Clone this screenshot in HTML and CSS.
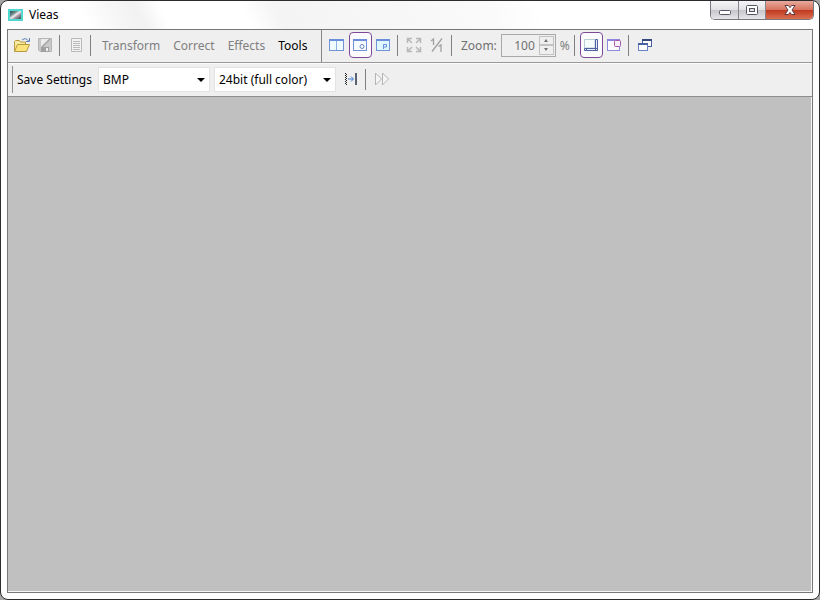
FILE: index.html
```html
<!DOCTYPE html>
<html lang="en">
<head>
    <meta charset="UTF-8">
    <meta name="viewport" content="width=device-width, initial-scale=1.0">
    <title>Vieas</title>
    <link rel="stylesheet" href="styles.css">
</head>
<body>

<div class="window">
    <header class="titlebar">
        <svg class="app-icon" width="16" height="14" viewBox="0 0 16 14">
            <defs>
                <linearGradient id="logo" x1="0" y1="0" x2="1" y2="1">
                    <stop offset="0" stop-color="#2c5658"/>
                    <stop offset="0.3" stop-color="#6b8584"/>
                    <stop offset="0.5" stop-color="#f4eef2"/>
                    <stop offset="0.65" stop-color="#a89aa4"/>
                    <stop offset="1" stop-color="#33454b"/>
                </linearGradient>
            </defs>
            <rect x="0" y="1" width="15" height="12" fill="#4fd8cf"/>
            <rect x="2" y="3" width="11" height="8" fill="url(#logo)"/>
        </svg>
        <span class="title">Vieas</span>
        <div class="window-buttons">
            <button class="win-btn minimize" aria-label="Minimize">
                <svg width="14" height="14" viewBox="0 0 14 14"><rect x="1.5" y="7.5" width="11" height="4" rx="1" fill="#fff" stroke="#555566"/></svg>
            </button>
            <button class="win-btn maximize" aria-label="Maximize">
                <svg width="14" height="14" viewBox="0 0 14 14"><rect x="1.5" y="2.5" width="11" height="9" rx="1" fill="#fff" stroke="#555566"/><rect x="4.5" y="5.5" width="5" height="3" fill="#ddd" stroke="#555566"/></svg>
            </button>
            <button class="win-btn close" aria-label="Close">
                <svg width="14" height="14" viewBox="0 0 14 14"><path d="M2 2.5h3.4L7 4.6 8.6 2.5H12L9 7l3 4.5H8.6L7 9.4l-1.6 2.1H2L5 7z" fill="#fff" stroke="#5c3a42"/></svg>
            </button>
        </div>
    </header>

    <main class="client">
        <div class="toolbar">
            <div class="group main-group">
                <button class="tool" aria-label="Open">
                    <svg width="18" height="16" viewBox="0 0 18 16">
                        <path d="M1.5 14V4.5l1-1h4l1 1.5h5v3" fill="#f7e9a0" stroke="#b89a3c"/>
                        <path d="M1.5 14.5L4.5 7.5h12l-3 7z" fill="#fbe27a" stroke="#b89a3c"/>
                        <path d="M9 3q4-3 6.5 1M16.5 1v3.5h-3.5" fill="none" stroke="#5c7fb5"/>
                    </svg>
                </button>
                <button class="tool" aria-label="Save" disabled>
                    <svg width="16" height="16" viewBox="0 0 16 16">
                        <path d="M1.5 1.5h13v13h-11.5l-1.5-1.5z" fill="#c9c9c9" stroke="#b5b5b5"/>
                        <path d="M4 2h8L5 9H4z" fill="#ececec"/>
                        <rect x="4" y="10" width="8" height="5" fill="#a0a0a0"/>
                        <rect x="9" y="11" width="2" height="3" fill="#eee"/>
                        <path d="M5 10l8-8" stroke="#a5a5a5" stroke-width="1.5"/>
                    </svg>
                </button>
                <span class="sep"></span>
                <button class="tool" aria-label="Properties" disabled>
                    <svg width="14" height="16" viewBox="0 0 14 16">
                        <path d="M2.5 1.5h10v13h-10z" fill="#f3f3f3" stroke="#b9b9b9"/>
                        <path d="M4 4.5h7M4 6.5h7M4 8.5h7M4 10.5h7M4 12.5h7" stroke="#bababa"/>
                    </svg>
                </button>
                <span class="sep"></span>
                <div class="menus">
                    <button class="menu" disabled>Transform</button>
                    <button class="menu" disabled>Correct</button>
                    <button class="menu" disabled>Effects</button>
                    <button class="menu">Tools</button>
                </div>
            </div>
            <div class="group view-group">
                <button class="tool" aria-label="Split view">
                    <svg width="16" height="14" viewBox="0 0 16 14">
                        <rect x="0.5" y="1.5" width="14" height="11" fill="#effcff" stroke="#7191d8"/>
                        <path d="M0 2h15" stroke="#6a8edc" stroke-width="2"/>
                        <path d="M7.5 3v9" stroke="#8fb0e4"/>
                    </svg>
                </button>
                <button class="tool active" aria-label="Original view">
                    <svg width="16" height="14" viewBox="0 0 16 14">
                        <rect x="1.5" y="1.5" width="13" height="11" fill="#f7fdff" stroke="#7191d8"/>
                        <path d="M1 2h14" stroke="#6a8edc" stroke-width="2"/>
                        <circle cx="10" cy="8.5" r="2" fill="none" stroke="#6b84c4"/>
                    </svg>
                </button>
                <button class="tool" aria-label="Preview view">
                    <svg width="16" height="14" viewBox="0 0 16 14">
                        <rect x="1.5" y="1.5" width="13" height="11" fill="#dff8ff" stroke="#7191d8"/>
                        <path d="M1 2h14" stroke="#6a8edc" stroke-width="2"/>
                        <path d="M8.5 11V6.5h3v2.5h-3" fill="none" stroke="#6a8edc"/>
                    </svg>
                </button>
                <span class="sep"></span>
                <button class="tool" aria-label="Fit to window" disabled>
                    <svg width="16" height="16" viewBox="0 0 16 16" fill="none" stroke="#b8b8b8">
                        <path d="M1.5 6V1.500H6M2 2l4 4M10 1.5h4.5V6M14 2l-4 4M1.5 10v4.5H6M2 14l4-4M10 14.5h4.5V10M14 14l-4-4" stroke-width="1.5"/>
                    </svg>
                </button>
                <button class="tool" aria-label="Actual size" disabled>
                    <svg width="16" height="16" viewBox="0 0 16 16" fill="none" stroke="#a0a0a0" stroke-width="1.3">
                        <path d="M2 4l2.5-2v6M13 1.5L3 14.5M9.5 9.5L12 8v7"/>
                    </svg>
                </button>
                <span class="sep"></span>
                <label class="zoom-label" for="zoom">Zoom:</label>
                <div class="spinner">
                    <input type="text" id="zoom" value="100" disabled>
                    <div class="arrows">
                        <button class="arrow up" aria-label="Zoom in" disabled></button>
                        <button class="arrow down" aria-label="Zoom out" disabled></button>
                    </div>
                </div>
                <span class="percent">%</span>
                <span class="sep"></span>
                <button class="tool active" aria-label="Show scroll bars">
                    <svg width="16" height="14" viewBox="0 0 16 14">
                        <path d="M1.5 10V1.5H12V10z" fill="#f6fcfc" stroke="#b9cdd3"/>
                        <path d="M1.5 10.5h13v2h-13zM12.5 1.5h2v11h-2z" fill="#e6ecfa" stroke="#4f62a4"/>
                        <path d="M3.5 10.5v2" stroke="#4f62a4"/>
                    </svg>
                </button>
                <button class="tool" aria-label="Show navigator">
                    <svg width="16" height="14" viewBox="0 0 16 14">
                        <rect x="1.5" y="1.5" width="12" height="11" fill="#fdfdff" stroke="#8d8ade"/>
                        <path d="M1 2h13" stroke="#8d84de" stroke-width="2"/>
                        <rect x="8.5" y="2.5" width="6" height="6" rx="1" fill="#f8f0fa" stroke="#a35aa8"/>
                    </svg>
                </button>
                <span class="sep"></span>
                <button class="tool" aria-label="Cascade windows">
                    <svg width="16" height="14" viewBox="0 0 16 14">
                        <rect x="5.5" y="1.5" width="9" height="7" fill="#fff" stroke="#4b60a0"/>
                        <path d="M5 2h10" stroke="#35487f" stroke-width="2"/>
                        <rect x="1.5" y="5.5" width="9" height="7" fill="#fff" stroke="#6a80c8"/>
                        <path d="M1 6h10" stroke="#4b60a0" stroke-width="2"/>
                    </svg>
                </button>
            </div>
        </div>

        <div class="toolbar save-bar">
            <span class="grip"></span>
            <label class="save-label" for="format">Save Settings</label>
            <div class="select format">
                <select id="format">
                    <option>BMP</option>
                </select>
            </div>
            <div class="select depth">
                <select aria-label="Color depth">
                    <option>24bit (full color)</option>
                </select>
            </div>
            <button class="tool" aria-label="Resize on save">
                <svg width="16" height="14" viewBox="0 0 16 14" fill="none">
                    <path d="M2.5 1v12" stroke="#222" stroke-dasharray="1 1"/>
                    <path d="M3.5 2v12" stroke="#222" stroke-dasharray="1 1"/>
                    <path d="M5 7h5M8 4.500L10.500 7 8 9.500" stroke="#3d7bd0"/>
                    <path d="M13 1v12" stroke="#5a6270" stroke-width="2"/>
                </svg>
            </button>
            <span class="sep"></span>
            <button class="tool" aria-label="Run" disabled>
                <svg width="16" height="14" viewBox="0 0 16 14" fill="#f5f5f5" stroke="#b5b5b5">
                    <path d="M1.5 1L7.5 7l-6 6zM8.5 1L14.5 7l-6 6z"/>
                </svg>
            </button>
        </div>

        <section class="canvas"></section>
    </main>
</div>

</body>
</html>
```
FILE: styles.css
```css
* {
    box-sizing: border-box;
}
body {
    margin: 0;
    background-color: #a5a5a5;
    font-family: "Noto Sans", "Open Sans", sans-serif;
    font-size: 12px;
    color: #000;
}
button, input, select {
    font: inherit;
    color: inherit;
    margin: 0;
    padding: 0;
    border: none;
    background: none;
}
svg {
    display: block;
}
.window {
    display: flex;
    flex-direction: column;
    height: 100vh;
    padding: 0 6px 6px;
    border: 1px solid #2e2a30;
    border-radius: 8px;
    background-color: #fdfdfd;
}

/* title bar */
.titlebar {
    display: flex;
    align-items: center;
    height: 28px;
    background: linear-gradient(65deg, #fff 10%, #f6f6f6 14%, #f2f2f2 17%, #fff 20%, #fff 30%, #f4f4f4 34%, #f8f8f8 52%, #fafafa 60%, #fff 66%);
}
.app-icon {
    margin-left: 1px;
}
.title {
    flex: 1;
    margin-left: 5px;
    padding-bottom: 2px;
}
.window-buttons {
    display: flex;
    align-self: flex-start;
    height: 19px;
    margin-right: -1px;
    border: 1px solid #77777f;
    border-top: none;
    border-radius: 0 0 5px 5px;
    overflow: hidden;
}
.win-btn {
    display: flex;
    align-items: center;
    justify-content: center;
    width: 27px;
    border-right: 1px solid #85858c;
    background: linear-gradient(#f5f5f7, #e2e2e5 48%, #c6c6cb 52%, #e6e6ea);
}
.win-btn.minimize {
    width: 28px;
}
.win-btn.close {
    width: 47px;
    border-right: none;
    background: linear-gradient(#e8aa9c, #d8745f 48%, #c03a22 52%, #dc6f50);
}

/* toolbars */
.client {
    flex: 1;
    display: flex;
    flex-direction: column;
    border: 1px solid #767676;
}
.toolbar {
    display: flex;
    height: 33px;
    background-color: #efefef;
    border-bottom: 1px solid #9a9a9a;
}
.group {
    display: flex;
    align-items: center;
    padding-bottom: 2px;
}
.main-group {
    width: 314px;
    padding-left: 3px;
    border-right: 1px solid #858585;
}
.view-group {
    flex: 1;
    padding-left: 4px;
}
.tool {
    display: flex;
    align-items: center;
    justify-content: center;
    flex: none;
    width: 23px;
    height: 26px;
    padding-right: 1px;
}
.tool.active {
    border: 1px solid #7c4a96;
    border-radius: 4px;
    background-color: #fbfafc;
}
.sep {
    flex: none;
    width: 1px;
    height: 21px;
    margin: 0 5px 0 2px;
    background-color: #808080;
}
.menus {
    display: flex;
    gap: 1px;
}
.menu {
    padding: 0 6px;
}
.menu:disabled {
    color: #808080;
}
.zoom-label {
    margin: 0 4px;
    color: #707070;
}
.spinner {
    display: flex;
    width: 55px;
    height: 23px;
    padding: 1px;
    border: 1px solid #a9a9a9;
}
.spinner input {
    flex: 1;
    min-width: 0;
    padding-right: 4px;
    text-align: right;
    color: #707070;
}
.arrows {
    display: flex;
    flex-direction: column;
    width: 15px;
}
.arrow {
    flex: 1;
    display: flex;
    align-items: center;
    justify-content: center;
    border: 1px solid #c2c2c2;
}
.arrow::before {
    content: "";
    border: 2px solid transparent;
}
.arrow.up::before {
    border-top: none;
    border-bottom: 3px solid #707070;
}
.arrow.down::before {
    border-bottom: none;
    border-top: 3px solid #707070;
}
.percent {
    margin: 0 2px 0 4px;
    color: #808080;
}

/* save settings */
.save-bar {
    height: 34px;
    align-items: center;
    padding-bottom: 2px;
    border-top: 1px solid #fafafa;
    border-bottom-color: #8c8c8c;
}
.grip {
    width: 2px;
    height: 27px;
    margin: 0 4px 0 3px;
    border-right: 1px solid #909090;
}
.save-label {
    width: 77px;
    margin-right: 4px;
    white-space: nowrap;
}
.select {
    position: relative;
    height: 25px;
    margin-right: 4px;
    border: 1px solid #e3e3e3;
    background-color: #fff;
}
.select::after {
    content: "";
    position: absolute;
    right: 4px;
    top: 10px;
    border: 4px solid transparent;
    border-top-color: #000;
    border-bottom: none;
    pointer-events: none;
}
.select select {
    appearance: none;
    width: 100%;
    height: 100%;
    padding-left: 4px;
}
.format {
    width: 112px;
}
.depth {
    width: 122px;
}

.canvas {
    flex: 1;
    border-right: 1px solid #f5f5f5;
    border-bottom: 1px solid #f5f5f5;
    background-color: #c0c0c0;
}
```
